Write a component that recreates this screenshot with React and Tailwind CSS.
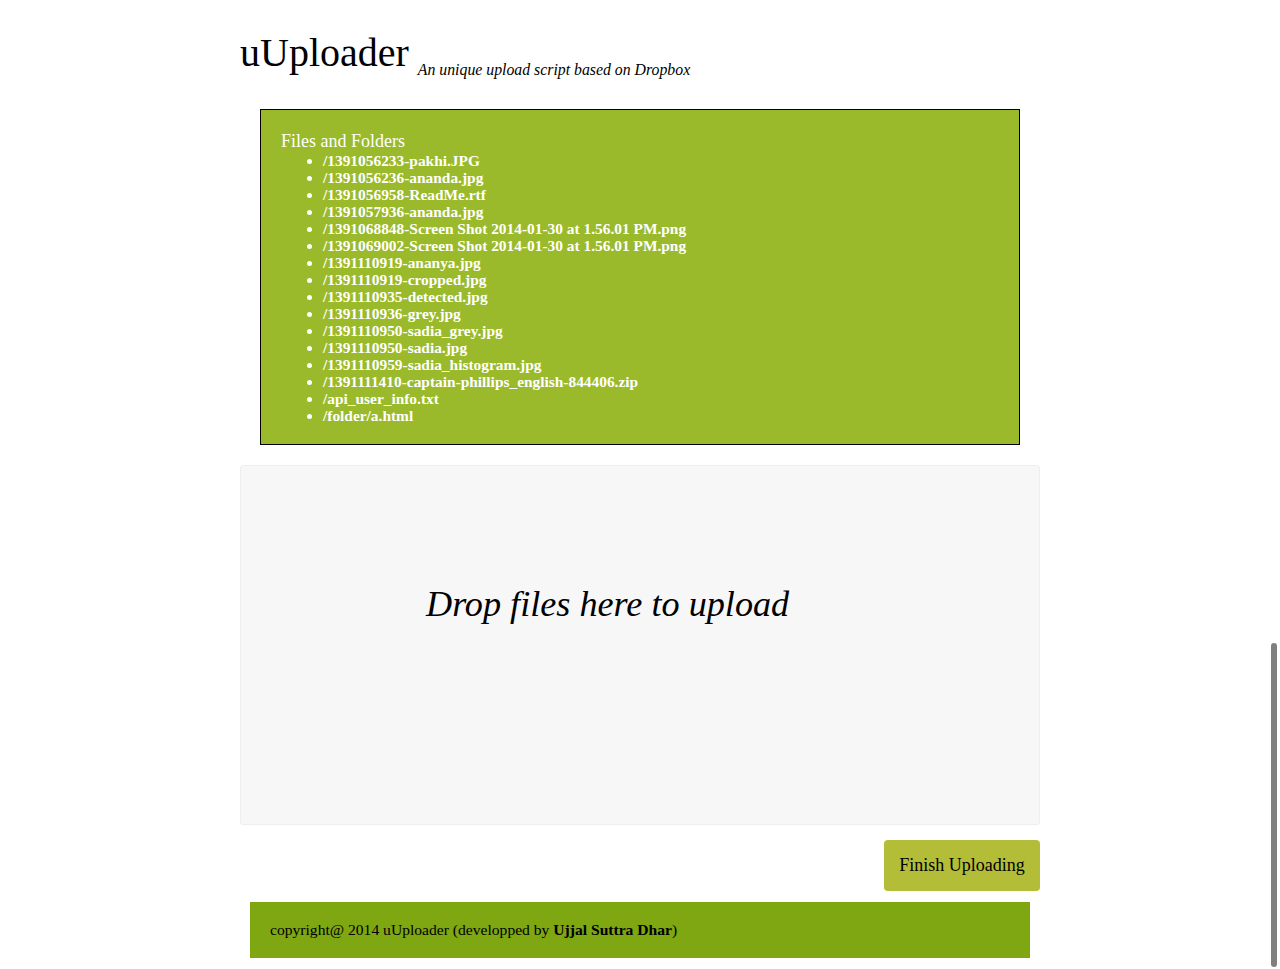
import React from 'react';

const files = [
    "/1391056233-pakhi.JPG",
    "/1391056236-ananda.jpg",
    "/1391056958-ReadMe.rtf",
    "/1391057936-ananda.jpg",
    "/1391068848-Screen Shot 2014-01-30 at 1.56.01 PM.png",
    "/1391069002-Screen Shot 2014-01-30 at 1.56.01 PM.png",
    "/1391110919-ananya.jpg",
    "/1391110919-cropped.jpg",
    "/1391110935-detected.jpg",
    "/1391110936-grey.jpg",
    "/1391110950-sadia_grey.jpg",
    "/1391110950-sadia.jpg",
    "/1391110959-sadia_histogram.jpg",
    "/1391111410-captain-phillips_english-844406.zip",
    "/api_user_info.txt",
    "/folder/a.html",
];

export default function App() {
    return (
        <div className="min-h-[969px] bg-white text-black font-['Liberation_Serif',serif]">
            <div className="w-[800px] mx-auto pt-[33px]">

                {/* header */}
                <div className="flex items-start h-[52px]">
                    <h1 className="text-[40px] leading-[40px]">uUploader</h1>
                    <span className="ml-[9px] mt-[28px] text-[15.8px] leading-[18px] italic">An unique upload script based on Dropbox</span>
                </div>

                {/* files list */}
                <div className="mx-[20px] mt-[24px] border border-black bg-[#9aba2b] text-white px-[20px] pt-[21px] pb-[20px]">
                    <h3 className="text-[18px] leading-[21px]">Files and Folders</h3>
                    <ul className="list-disc pl-[42px] text-[15.4px] leading-[17px] font-bold">
                        {files.map((f) => (
                            <li key={f}>{f}</li>
                        ))}
                    </ul>
                </div>

                {/* dropzone */}
                <div className="mt-[20px] h-[360px] bg-[#f7f7f7] border border-[#eeeeee] rounded-[3px] flex items-center pl-[185px] pb-[82px]">
                    <p className="text-[36.2px] italic">Drop files here to upload</p>
                </div>

                <div className="flex justify-end mt-[15px]">
                    <button className="bg-[#b4bd37] rounded-[4px] w-[156px] h-[51px] text-[18px]">Finish Uploading</button>
                </div>

                {/* footer */}
                <div className="mx-[10px] mt-[11px] h-[56px] bg-[#7ea711] flex items-center px-[20px] text-[15.6px]">
                    <span>copyright@ 2014 uUploader (developped by <b>Ujjal Suttra Dhar</b>)</span>
                </div>
            </div>

            {/* overlay scrollbar */}
            <div className="fixed right-[3px] top-[643px] w-[6px] h-[324px] bg-[#7f7f7f] rounded-full"></div>
        </div>
    );
}
